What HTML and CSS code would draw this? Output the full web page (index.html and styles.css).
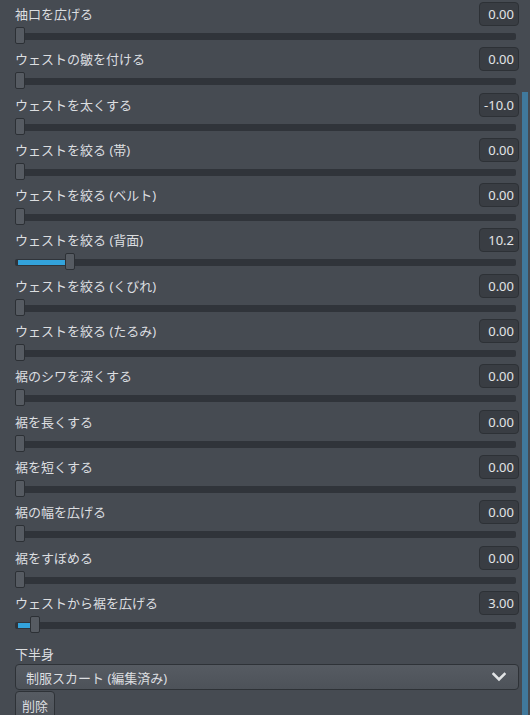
FILE: index.html
```html
<!DOCTYPE html>
<html lang="ja">
<head>
<meta charset="utf-8">
<link rel="stylesheet" href="styles.css">
</head>
<body>
<div class="page">
  <div class="panel">
    <div class="row"><div class="head"><span class="label">袖口を広げる</span><span class="value">0.00</span></div><div class="slider"><div class="track"></div><div class="handle" style="left:0px"></div></div></div>
    <div class="row"><div class="head"><span class="label">ウェストの皺を付ける</span><span class="value">0.00</span></div><div class="slider"><div class="track"></div><div class="handle" style="left:0px"></div></div></div>
    <div class="row"><div class="head"><span class="label">ウェストを太くする</span><span class="value">-10.0</span></div><div class="slider"><div class="track"></div><div class="handle" style="left:0px"></div></div></div>
    <div class="row"><div class="head"><span class="label">ウェストを絞る (帯)</span><span class="value">0.00</span></div><div class="slider"><div class="track"></div><div class="handle" style="left:0px"></div></div></div>
    <div class="row"><div class="head"><span class="label">ウェストを絞る (ベルト)</span><span class="value">0.00</span></div><div class="slider"><div class="track"></div><div class="handle" style="left:0px"></div></div></div>
    <div class="row"><div class="head"><span class="label">ウェストを絞る (背面)</span><span class="value">10.2</span></div><div class="slider"><div class="track"><div class="fill" style="width:47px"></div></div><div class="handle" style="left:50px"></div></div></div>
    <div class="row"><div class="head"><span class="label">ウェストを絞る (くびれ)</span><span class="value">0.00</span></div><div class="slider"><div class="track"></div><div class="handle" style="left:0px"></div></div></div>
    <div class="row"><div class="head"><span class="label">ウェストを絞る (たるみ)</span><span class="value">0.00</span></div><div class="slider"><div class="track"></div><div class="handle" style="left:0px"></div></div></div>
    <div class="row"><div class="head"><span class="label">裾のシワを深くする</span><span class="value">0.00</span></div><div class="slider"><div class="track"></div><div class="handle" style="left:0px"></div></div></div>
    <div class="row"><div class="head"><span class="label">裾を長くする</span><span class="value">0.00</span></div><div class="slider"><div class="track"></div><div class="handle" style="left:0px"></div></div></div>
    <div class="row"><div class="head"><span class="label">裾を短くする</span><span class="value">0.00</span></div><div class="slider"><div class="track"></div><div class="handle" style="left:0px"></div></div></div>
    <div class="row"><div class="head"><span class="label">裾の幅を広げる</span><span class="value">0.00</span></div><div class="slider"><div class="track"></div><div class="handle" style="left:0px"></div></div></div>
    <div class="row"><div class="head"><span class="label">裾をすぼめる</span><span class="value">0.00</span></div><div class="slider"><div class="track"></div><div class="handle" style="left:0px"></div></div></div>
    <div class="row"><div class="head"><span class="label">ウェストから裾を広げる</span><span class="value">3.00</span></div><div class="slider"><div class="track"><div class="fill" style="width:12px"></div></div><div class="handle" style="left:15px"></div></div></div>

    <div class="section-label">下半身</div>
    <div class="dropdown">
      <span>制服スカート (編集済み)</span>
      <svg class="chevron" width="14" height="10" viewBox="0 0 14 10"><path d="M1.5 2 L7 7.5 L12.5 2" fill="none" stroke="#e2e4e6" stroke-width="2.6" stroke-linecap="square"/></svg>
    </div>
    <div class="button">削除</div>
  </div>
  <div class="scrollbar"><div class="thumb"></div></div>
</div>
</body>
</html>
```

FILE: styles.css
```css
html, body {
  margin: 0;
  padding: 0;
  background: #464b52;
  overflow: hidden;
}
body {
  width: 530px;
  height: 715px;
  font-family: "Noto Sans", "Noto Sans CJK JP", sans-serif;
  font-size: 13px;
  color: #dcdee0;
}
.page {
  display: flex;
  width: 530px;
  height: 715px;
}
.panel {
  width: 504px;
  padding-left: 15px;
  padding-right: 2px;
  flex: none;
}
.row {
  height: 45.3px;
  box-sizing: border-box;
  padding-top: 2px;
}
.head {
  display: flex;
  justify-content: space-between;
  align-items: center;
  height: 24px;
}
.label {
  line-height: 16px;
  white-space: nowrap;
}
.value {
  box-sizing: border-box;
  width: 40px;
  height: 24px;
  line-height: 22px;
  text-align: right;
  padding-right: 4px;
  background: #393d43;
  border: 1px solid #2d3136;
  border-radius: 4px;
  color: #e2e4e6;
}
.slider {
  position: relative;
  width: 501px;
  height: 17px;
  margin-top: 1px;
}
.track {
  position: absolute;
  left: 0;
  right: 0;
  top: 6px;
  height: 7px;
  background: #30343a;
  border-radius: 2px;
}
.fill {
  position: absolute;
  left: 3px;
  top: 1px;
  height: 5px;
  background: #33a3dc;
}
.handle {
  position: absolute;
  top: 0;
  width: 10px;
  height: 17px;
  box-sizing: border-box;
  background: #565b62;
  border: 1px solid #2c3035;
  border-radius: 2px;
}
.section-label {
  height: 30px;
  line-height: 16px;
  padding-top: 12px;
  box-sizing: border-box;
}
.dropdown {
  box-sizing: border-box;
  width: 504px;
  height: 26px;
  display: flex;
  align-items: center;
  justify-content: space-between;
  padding: 0 12px 0 10px;
  background: linear-gradient(#565b62, #4d5259);
  border: 1px solid #2e3237;
  border-radius: 4px;
}
.chevron {
  display: block;
}
.button {
  box-sizing: border-box;
  width: 40px;
  height: 30px;
  margin-top: 1px;
  padding: 4px 0 0 6px;
  background: linear-gradient(#565b62, #4d5259);
  border: 1px solid #2e3237;
  border-radius: 4px;
}
.scrollbar {
  flex: none;
  width: 9px;
  padding-top: 92px;
  box-sizing: border-box;
  padding-left: 1px;
}
.thumb {
  width: 6px;
  height: 640px;
  background: #40799c;
}
```
